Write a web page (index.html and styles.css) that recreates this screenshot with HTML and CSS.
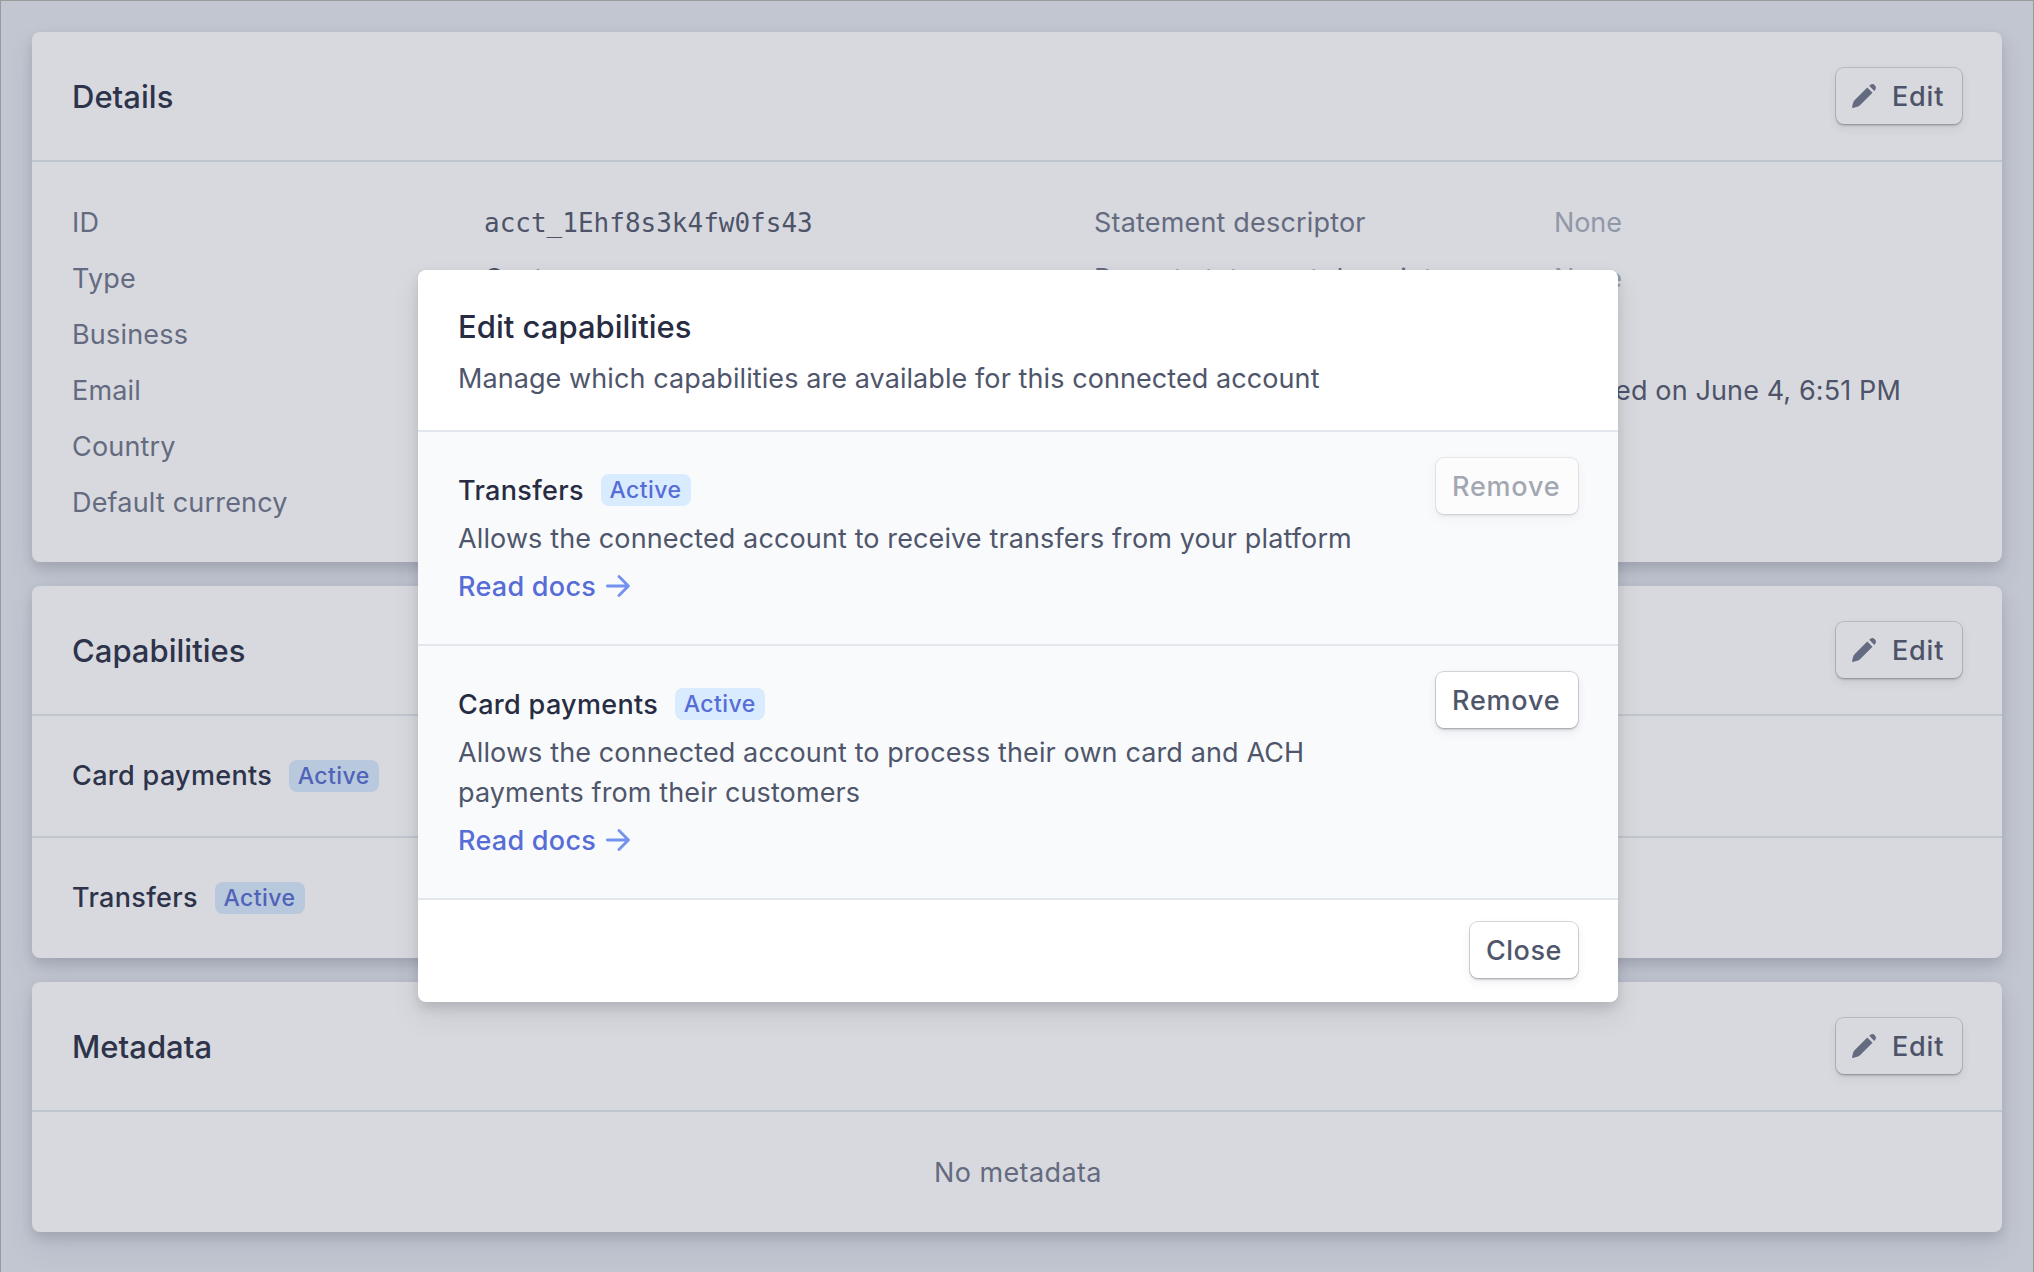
FILE: index.html
```html
<!DOCTYPE html>
<html lang="en">
<head>
<meta charset="utf-8">
<title>Connected account</title>
<link rel="stylesheet" href="styles.css">
</head>
<body>
<svg class="sprite" aria-hidden="true">
  <symbol id="pencil" viewBox="0 0 24 24"><path d="M15.3 3.5 20.5 8.7 8 21.2Q6.3 22.7 4.3 23.1L.9 23.9Q0 24 .1 23.1L.9 19.6Q1.4 17.4 2.8 16ZM17.2 1.8 18.2.9Q20.6-.9 22.8 1.3 25 3.6 23 6L22.3 6.9Z"/></symbol>
  <symbol id="arrow" viewBox="0 0 24 24"><path d="M1.4 12H22M13 2.6 22.4 12 13 21.4" fill="none" stroke="currentColor" stroke-width="2.8" stroke-linecap="round" stroke-linejoin="round"/></symbol>
</svg>
<main class="page">
  <section class="card">
    <header class="card-header"><h2 class="title">Details</h2><button class="button button-edit"><svg class="icon"><use href="#pencil"/></svg><span>Edit</span></button></header>
    <div class="details">
      <span class="label">ID</span><span class="mono">acct_1Ehf8s3k4fw0fs43</span><span class="label">Statement descriptor</span><span class="none">None</span>
      <span class="label">Type</span><span>Custom</span><span class="label">Payout statement descriptor</span><span class="none">None</span>
      <span class="label">Business</span><span></span><span></span><span></span>
      <span class="label">Email</span><span></span><span></span><span>Agreed on June 4, 6:51 PM</span>
      <span class="label">Country</span><span></span><span></span><span></span>
      <span class="label">Default currency</span><span></span><span></span><span></span>
    </div>
  </section>
  <section class="card">
    <header class="card-header"><h2 class="title">Capabilities</h2><button class="button button-edit"><svg class="icon"><use href="#pencil"/></svg><span>Edit</span></button></header>
    <div class="row"><span class="name">Card payments</span><span class="badge">Active</span></div>
    <div class="row"><span class="name">Transfers</span><span class="badge">Active</span></div>
  </section>
  <section class="card">
    <header class="card-header"><h2 class="title">Metadata</h2><button class="button button-edit"><svg class="icon"><use href="#pencil"/></svg><span>Edit</span></button></header>
    <p class="empty">No metadata</p>
  </section>
</main>
<div class="overlay">
  <div class="modal" role="dialog">
    <header class="modal-header">
      <h2 class="title">Edit capabilities</h2>
      <p class="text summary">Manage which capabilities are available for this connected account</p>
    </header>
    <section class="item">
      <div class="item-body">
        <div class="item-name"><span class="name">Transfers</span><span class="badge">Active</span></div>
        <p class="text">Allows the connected account to receive transfers from your platform</p>
        <a class="link">Read docs<svg class="arrow"><use href="#arrow"/></svg></a>
      </div>
      <button class="button button-remove" disabled><span>Remove</span></button>
    </section>
    <section class="item">
      <div class="item-body">
        <div class="item-name"><span class="name">Card payments</span><span class="badge">Active</span></div>
        <p class="text">Allows the connected account to process their own card and ACH payments from their customers</p>
        <a class="link">Read docs<svg class="arrow"><use href="#arrow"/></svg></a>
      </div>
      <button class="button button-remove"><span>Remove</span></button>
    </section>
    <footer class="modal-footer"><button class="button button-close"><span>Close</span></button></footer>
  </div>
</div>
</body>
</html>
```
FILE: styles.css
```css
* { box-sizing: border-box; margin: 0; }

body {
  --ink: #2d334a;
  --text: #4d5369;
  --surface: #d8d9de;
  --line: #c0c6d0;
  --badge: #b8c8dd;
  --badge-text: #4f63b8;
  height: 1272px;
  overflow: hidden;
  background: #c2c6d0;
  color: var(--text);
  font: 400 27px/40px Inter, "Liberation Sans", sans-serif;
  letter-spacing: .12px;
}

.sprite { display: none; }

.page {
  display: flex;
  flex-direction: column;
  gap: 24px;
  height: 1272px;
  padding: 31px 31px 0;
  border: 1px solid #999a9c;
  border-bottom: 0;
}

.card {
  border-radius: 8px;
  background: var(--surface);
  box-shadow: 0 14px 28px rgba(60, 66, 120, .1), 0 6px 12px rgba(0, 0, 0, .12);
}

.card-header {
  display: flex;
  align-items: center;
  justify-content: space-between;
  height: 130px;
  padding: 0 40px;
  border-bottom: 2px solid var(--line);
}

.title {
  color: var(--ink);
  font-size: 31px;
  font-weight: 500;
  letter-spacing: .02px;
}

.card-header .title { padding-top: 2px; }

.details {
  display: grid;
  grid-template-columns: 412px 610px 460px 1fr;
  grid-auto-rows: 56px;
  padding: 33px 40px 31px;
  line-height: 56px;
  white-space: nowrap;
}

.label { color: #646b80; letter-spacing: .18px; }
.none { color: #9098a8; letter-spacing: -.1px; }
.mono { font: 26px/56px "DejaVu Sans Mono", monospace; letter-spacing: 0; }

.row {
  display: flex;
  align-items: center;
  gap: 17px;
  height: 122px;
  padding: 0 40px;
  border-bottom: 2px solid var(--line);
}

.row:last-child { height: 120px; border-bottom: 0; }

.name { color: var(--ink); font-weight: 500; letter-spacing: .33px; }

.badge {
  width: 90px;
  padding-right: 1px;
  border-radius: 8px;
  background: var(--badge);
  color: var(--badge-text);
  font-size: 23px;
  font-weight: 500;
  line-height: 32px;
  letter-spacing: .44px;
  text-align: center;
}

.empty {
  padding: 1px 0 0 2px;
  color: #646b80;
  line-height: 120px;
  height: 120px;
  text-align: center;
  letter-spacing: .4px;
}

.button {
  display: flex;
  align-items: center;
  gap: 16px;
  height: 56px;
  padding: 0 16px;
  border: 0;
  border-radius: 8px;
  background: var(--surface);
  box-shadow: 0 0 0 1px rgba(60, 66, 87, .2), 0 2px 2px rgba(0, 0, 0, .14), 0 4px 10px rgba(60, 66, 87, .1);
  color: var(--text);
  font: 500 27px/54px Inter, "Liberation Sans", sans-serif;
  letter-spacing: .8px;
}

.button span { padding-top: 2px; }

.button-edit { width: 126px; }
.button-remove { width: 142px; margin-top: 26px; }
.button-close { width: 108px; letter-spacing: .5px; }
.button:disabled { opacity: .5; }

.icon { width: 24px; height: 24px; flex: none; fill: #646b80; }

.overlay {
  position: absolute;
  inset: 0;
  display: flex;
  align-items: center;
  justify-content: center;
  padding-left: 2px;
}

.modal {
  --ink: #272c42;
  --text: #4f566b;
  --surface: #fff;
  --line: #e3e7ed;
  --badge: #d9ebfe;
  --badge-text: #566cd6;
  width: 1200px;
  border-radius: 8px;
  background: var(--surface);
  color: var(--text);
  box-shadow: 0 14px 28px rgba(60, 66, 87, .1), 0 6px 12px rgba(0, 0, 0, .12);
}

.modal-header {
  display: flex;
  flex-direction: column;
  gap: 12px;
  height: 162px;
  padding: 37px 40px 0;
  border-bottom: 2px solid var(--line);
}

.summary { letter-spacing: .08px; }

.item {
  display: flex;
  justify-content: space-between;
  padding: 0 40px;
  border-bottom: 2px solid var(--line);
  background: #f9fafc;
}

.item-body {
  display: flex;
  flex-direction: column;
  align-items: flex-start;
  gap: 8px;
  width: 900px;
  padding: 39px 0 37px;
}

.item-name { display: flex; align-items: center; gap: 17px; }
.item-name .badge { margin-bottom: 2px; }

.link {
  display: flex;
  align-items: center;
  gap: 10px;
  color: #566cd6;
  font-weight: 500;
  letter-spacing: .28px;
}

.arrow { width: 24px; height: 24px; margin-bottom: 2px; color: #7391ee; }

.modal-footer {
  display: flex;
  justify-content: flex-end;
  height: 102px;
  padding: 22px 40px;
}
```
